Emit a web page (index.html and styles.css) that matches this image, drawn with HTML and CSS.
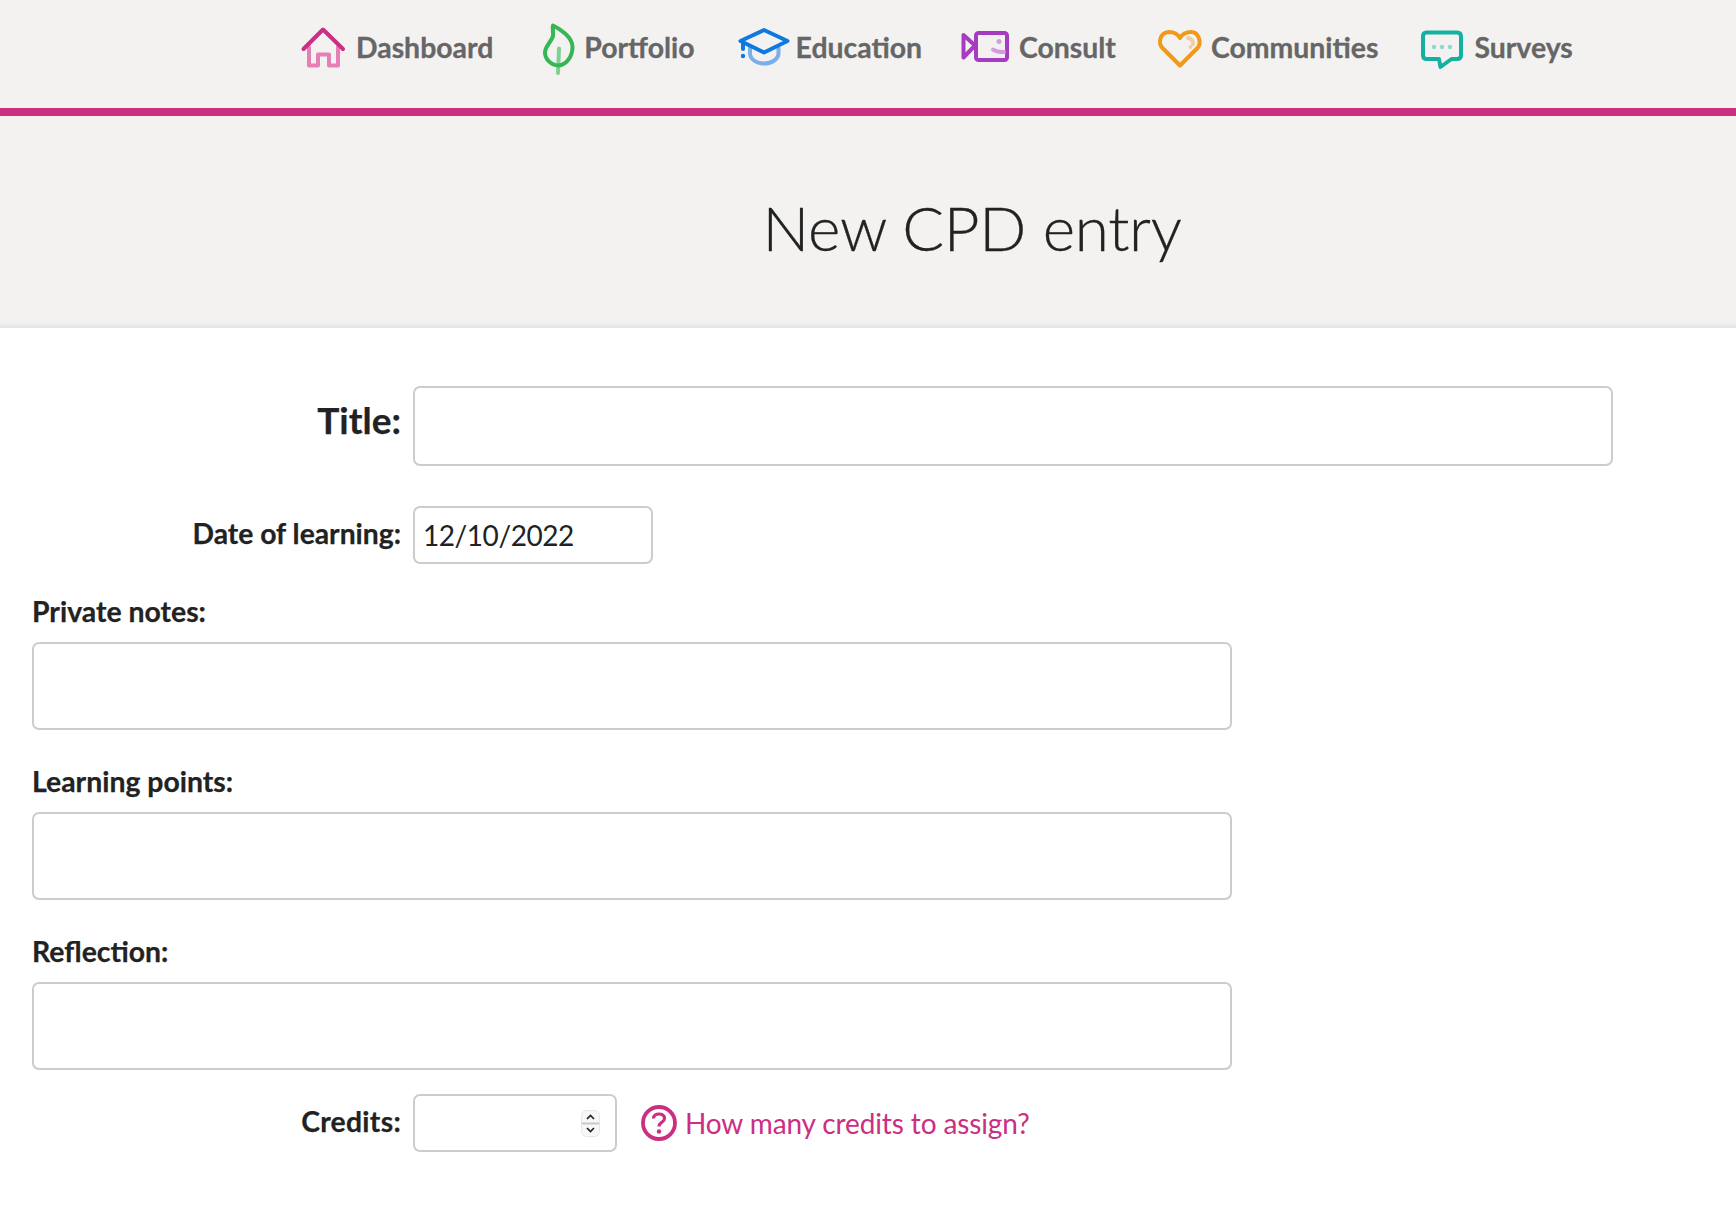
FILE: index.html
```html
<!DOCTYPE html>
<html lang="en">
<head>
<meta charset="utf-8">
<title>New CPD entry</title>
<link rel="stylesheet" href="styles.css">
</head>
<body>
<header class="site-header">
  <nav class="nav">
    <a class="nav-item" href="#">
      <svg class="icon icon-home" viewBox="301 22 45 50"><path class="lt" stroke="#e57fb4" d="M309 47V65.5H318V54.5H329V65.5H338V47"/><path stroke="#cc2e82" d="M303.5 49L323 29.500L343 49"/></svg>
      <span>Dashboard</span>
    </a>
    <a class="nav-item" href="#">
      <svg class="icon icon-leaf" viewBox="534 22 40 50"><path stroke="#7fd18f" d="M559 48.500L558 73"/><path stroke="#35b854" d="M553 25.500C560 29 572.500 37 572.500 47C572.500 57 566 65 558.500 65.500C551 65.500 545 59 545 52.500C545 46 552 41 553 36C553.500 32 552 28 553 25.500Z"/></svg>
      <span>Portfolio</span>
    </a>
    <a class="nav-item" href="#">
      <svg class="icon icon-cap" viewBox="735 22 50 50"><path stroke="#7ab0ea" d="M749 48V53C749 59 755 63.500 763 63.500C771 63.500 777.500 59 777.500 53V48"/><path stroke="#1079e0" d="M739.500 41L763 30L786.500 41L763 52.500Z"/><path stroke="#1079e0" d="M742 44V49"/><circle fill="#1079e0" cx="742" cy="56" r="2.200"/></svg>
      <span>Education</span>
    </a>
    <a class="nav-item" href="#">
      <svg class="icon icon-video" viewBox="964 22 46 50"><rect stroke="#a63cc0" x="977" y="33" width="31" height="27" rx="2.500"/><path stroke="#a63cc0" d="M964.500 35L976 45.500L964.500 57.500Z"/><circle fill="#d69ae0" cx="1000" cy="41.500" r="2.500"/><path stroke="#d69ae0" d="M994 49.500C997 51.500 1001 52 1005 52"/></svg>
      <span>Consult</span>
    </a>
    <a class="nav-item" href="#">
      <svg class="icon icon-heart" viewBox="1156 22 44 50"><path stroke="#ef9a1a" d="M1179 65.500L1161.500 48C1157 43.500 1158.500 32.500 1168 32C1173 32 1177 34.500 1179 38C1181.500 34 1185.500 32 1190 32C1198 32 1201 43 1196.500 48Z"/><path stroke="#f4cca0" d="M1187 38C1190 38.500 1192.500 41 1192 44"/><circle fill="#f4cca0" cx="1189.500" cy="47" r="2"/></svg>
      <span>Communities</span>
    </a>
    <a class="nav-item" href="#">
      <svg class="icon icon-bubble" viewBox="1419 22 45 50"><path stroke="#14b0a0" d="M1426.500 32.500H1457C1459.500 32.500 1461 34 1461 36.500V55C1461 57.500 1459.500 59 1457 59H1451.500L1440.500 67L1439 59H1426.500C1424 59 1423 57.500 1423 55V36.500C1423 34 1424 32.500 1426.500 32.500Z"/><circle fill="#8fd8cc" cx="1434" cy="47" r="2.200"/><circle fill="#8fd8cc" cx="1442" cy="47" r="2.200"/><circle fill="#8fd8cc" cx="1450" cy="47" r="2.200"/></svg>
      <span>Surveys</span>
    </a>
  </nav>
  <div class="title-band">
    <h1>New CPD entry</h1>
  </div>
</header>
<main class="form">
  <div class="row row-title">
    <label class="side-label label-title" for="title">Title:</label>
    <input class="field field-title" id="title" type="text">
  </div>
  <div class="row row-date">
    <label class="side-label" for="date">Date of learning:</label>
    <input class="field field-date" id="date" type="text" value="12/10/2022">
  </div>
  <div class="block block-first">
    <label class="top-label" for="notes">Private notes:</label>
    <textarea class="field area" id="notes"></textarea>
  </div>
  <div class="block">
    <label class="top-label" for="points">Learning points:</label>
    <textarea class="field area" id="points"></textarea>
  </div>
  <div class="block">
    <label class="top-label" for="reflection">Reflection:</label>
    <textarea class="field area" id="reflection"></textarea>
  </div>
  <div class="row row-credits">
    <label class="side-label label-credits" for="credits">Credits:</label>
    <div class="credits-wrap">
      <input class="field field-credits" id="credits" type="text">
      <svg class="spinner" viewBox="0 0 19 27"><rect x="0.500" y="0.500" width="18" height="26" rx="5" fill="#f7f7f7" stroke="#e6e6e6"/><path d="M1 13.500H18" stroke="#c9c9c9" stroke-width="2"/><path d="M6 9L9.500 5.500L13 9M6 18L9.500 21.500L13 18" fill="none" stroke="#222" stroke-width="1.700"/></svg>
    </div>
    <a class="help" href="#">
      <svg class="help-icon" viewBox="0 0 36 36"><circle cx="18" cy="18" r="16" fill="none" stroke="#cc2e82" stroke-width="3.800"/><path d="M12.500 13.500C12.500 10.500 15 9 18 9C21 9 23.500 10.500 23.500 13.500C23.500 17.500 18 17 18 21.500" fill="none" stroke="#cc2e82" stroke-width="3.200"/><circle cx="18" cy="26.500" r="2.200" fill="#cc2e82"/></svg>
      <span>How many credits to assign?</span>
    </a>
  </div>
</main>
</body>
</html>
```
FILE: styles.css
```css
* { box-sizing: border-box; }
html, body { margin: 0; padding: 0; background: #fff; }
body { font-family: Lato, "Liberation Sans", sans-serif; color: #222; min-height: 1210px; }
.site-header { background: #f3f2f1; }
.nav { display: flex; gap: 41px; height: 116px; padding: 22px 0 36px 301px; border-bottom: 8px solid #cc2e82; }
.nav-item { display: flex; align-items: center; gap: 10px; color: #666; font-weight: 700; font-size: 28.4px; -webkit-text-stroke: .3px #666; text-decoration: none; white-space: nowrap; }
.icon { height: 50px; flex: none; overflow: visible; }
.icon * { stroke-width: 4; stroke-linejoin: round; stroke-linecap: round; }
.icon path, .icon rect { fill: none; }
.icon circle { stroke: none; }
.icon-home { width: 45px; }
.icon-leaf { width: 40px; }
.icon-cap { width: 50px; }
.icon-video { width: 46px; }
.icon-heart { width: 44px; }
.icon-bubble { width: 45px; }
.title-band { height: 212px; padding: 9px 0 0 208px; display: flex; align-items: center; justify-content: center; box-shadow: inset 0 -9px 9px -9px rgba(0,0,0,.13); }
h1 { margin: 0; font-size: 62px; letter-spacing: -.3px; font-weight: 300; -webkit-text-stroke: .3px #222; line-height: 1; color: #222; }
.form { padding: 58px 0 0 0; }
.row { display: flex; gap: 12px; align-items: center; }
.side-label { width: 401px; text-align: right; font-weight: 700; font-size: 28.3px; -webkit-text-stroke: .25px #222; line-height: 36px; padding-bottom: 4px; flex: none; }
.label-title { font-size: 37px; line-height: 46px; padding-bottom: 12px; }
.label-credits { letter-spacing: .3px; }
.field { display: block; border: 2px solid #ccc; border-radius: 7px; background: #fff; font-family: inherit; font-size: 28px; color: #222; padding: 0 8px; outline: none; resize: none; margin: 0; }
.field-title { width: 1200px; height: 80px; }
.row-date { margin-top: 40px; }
.field-date { width: 240px; height: 58px; letter-spacing: -.44px; }
.block-first { margin-top: 29px; }
.block { padding-left: 32px; }
.block + .block { margin-top: 33px; }
.top-label { display: block; font-weight: 700; font-size: 28.4px; -webkit-text-stroke: .25px #222; line-height: 36px; margin-bottom: 13px; }
.area { width: 1200px; height: 88px; }
.row-credits { margin-top: 24px; }
.credits-wrap { position: relative; flex: none; }
.field-credits { width: 204px; height: 58px; }
.spinner { position: absolute; left: 168px; top: 16px; width: 19px; height: 27px; }
.help { display: flex; align-items: center; gap: 8px; margin-left: 12px; color: #cc2e82; font-size: 28px; letter-spacing: -.12px; text-decoration: none; white-space: nowrap; }
.help-icon { width: 36px; height: 36px; flex: none; }
```
